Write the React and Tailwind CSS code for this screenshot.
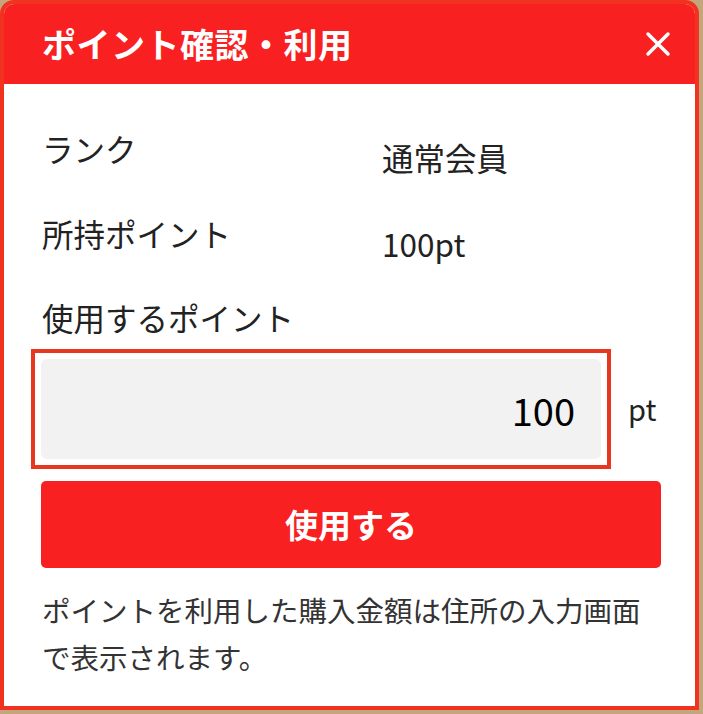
const FONT = { fontFamily: '"Noto Sans CJK JP", "Noto Sans", sans-serif' };

function CloseIcon() {
  return (
    <svg width="26" height="26" viewBox="0 0 26 26" fill="none">
      <path d="M3 3L23 23M23 3L3 23" stroke="white" strokeWidth="3.5" strokeLinecap="round" />
    </svg>
  );
}

export default function App() {
  return (
    <div className="h-[714px] w-[703px] bg-[#c4a57c]" style={FONT}>
      <div className="flex h-[710px] w-[699px] flex-col overflow-hidden rounded-t-[14px] border-4 border-[#f0321e] bg-white">
        {/* Header */}
        <div className="flex h-[80px] shrink-0 items-center justify-between bg-[#f82020] pl-[38px] pr-[24px]">
          <h1 className="text-[34px] font-bold leading-none tracking-[0.5px] text-white">ポイント確認・利用</h1>
          <CloseIcon />
        </div>

        {/* Body */}
        <div className="flex flex-col pl-[37px] pr-[34px] pt-[41px] text-[#222]">
          <div className="flex h-[85px] items-start">
            <span className="ml-px w-[340px] text-[31.5px] leading-[46px]">ランク</span>
            <span className="mt-[9px] text-[31.5px] leading-[46px]">通常会員</span>
          </div>
          <div className="flex h-[84px] items-start">
            <span className="ml-px w-[340px] text-[31.5px] leading-[46px]">所持ポイント</span>
            <span className="mt-[10px] text-[31.5px] leading-[46px]">100pt</span>
          </div>
          <div className="ml-px text-[31.5px] leading-[46px]">使用するポイント</div>

          <div className="mt-[9px] flex items-center">
            <div className="-ml-[10px] h-[120px] w-[580px] border-4 border-[#e8371f] p-[6px]">
              <div className="flex h-full items-center justify-end rounded-[6px] bg-[#f2f2f2] pr-[26px]">
                <span className="text-[38px] text-black">100</span>
              </div>
            </div>
            <span className="ml-[17px] text-[29px]">pt</span>
          </div>

          <button className="mt-[12px] flex h-[87px] w-[620px] items-center justify-center rounded-[5px] bg-[#f82020] text-[33px] font-bold text-white">
            使用する
          </button>

          <p className="mt-[18px] ml-px text-[28.5px] leading-[47px] text-[#333]">
            ポイントを利用した購入金額は住所の入力画面で表示されます。
          </p>
        </div>
      </div>
    </div>
  );
}
